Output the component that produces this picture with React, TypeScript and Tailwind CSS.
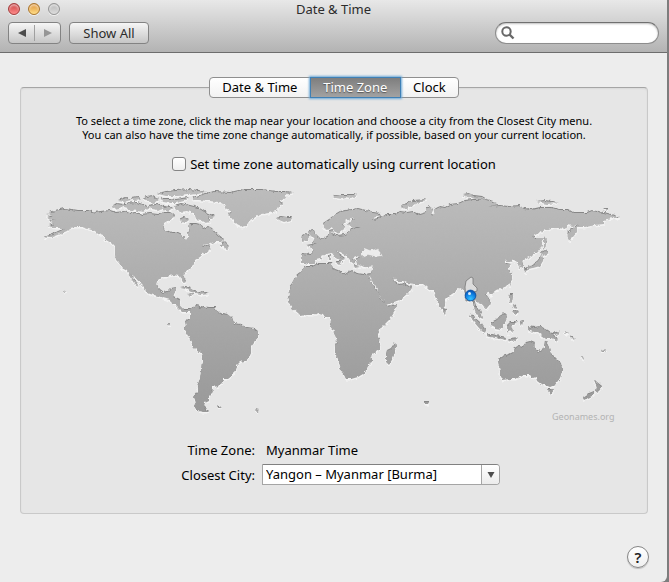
import React, { useState } from "react";

const NORTH_AMERICA =
  "M48 212L56 210L64 208L72 209L78 210L88 210L96 212L100 211L110 210L116 212L124 211L130 213L136 212L142 214L150 213L158 214L164 212L170 212L173 214L175 216L170 219L165 222L163 226L165 230L173 232L178 232L182 234L183 237L186 239L188 237L188 233L190 229L188 226L191 223L196 223L200 224L203 228L208 226L212 228L215 232L219 235L224 239L222 241L215 241L210 243L204 244L202 246L208 245L211 248L208 251L203 253L200 256L195 259L193 264L188 269L184 271L183 275L186 281L184 282L181 279L179 275L173 274L168 276L162 276L158 279L157 284L159 289L163 292L168 291L171 288L176 287L175 291L173 296L178 298L180 299L180 305L184 309L190 309L191 311L187 311L182 311L177 306L170 299L163 297L158 295L150 293L145 290L144 286L139 281L135 276L131 273L133 277L136 281L138 285L134 282L130 276L127 270L122 267L119 262L116 259L115 252L115 246L111 242L106 239L103 235L98 233L95 230L88 228L82 226L75 226L70 227L67 230L60 233L52 236L44 237L52 234L58 231L65 228L60 227L55 227L48 225L54 223L49 220L56 219L47 217L54 215L46 214L54 213Z";

const SOUTH_AMERICA =
  "M190 310L193 306L198 304L199 307L203 306L209 307L215 307L218 311L222 313L228 314L232 317L234 323L241 324L247 327L254 328L258 331L258 336L254 341L251 345L251 352L249 357L245 360L240 361L237 364L236 369L232 375L228 378L222 378L223 382L219 385L213 386L211 389L213 391L209 395L209 400L205 402L204 406L209 411L203 411L198 410L194 406L196 402L194 396L197 392L197 386L200 379L201 371L202 361L202 353L196 348L193 345L190 339L187 333L184 329L186 325L185 321L190 318Z";

const AFRICA =
  "M305 266L301 272L295 277L292 283L289 287L290 294L288 301L292 307L298 312L301 315L307 314L313 314L319 312L323 313L325 316L330 316L331 320L330 325L334 331L337 340L335 345L335 352L338 358L340 366L344 374L346 378L351 378L358 376L363 373L367 368L368 363L372 361L371 355L374 352L380 348L380 341L378 337L378 332L382 326L390 318L395 310L397 304L392 305L387 306L385 302L380 297L378 292L372 283L369 276L371 273L364 274L357 273L352 270L348 272L345 274L339 270L333 268L331 263L325 263L318 263L312 266Z";

const EURASIA =
  "M370 275L372 270L373 265L368 266L363 266L357 263L356 259L360 256L356 255L352 257L355 260L354 263L350 260L346 255L341 252L336 249L338 253L345 258L343 259L343 262L340 259L335 256L332 252L326 253L322 255L320 258L316 259L314 263L307 263L304 262L301 262L301 257L302 253L311 254L313 250L310 246L306 245L312 244L317 242L321 239L326 236L330 235L329 230L333 229L332 233L336 235L345 234L349 232L351 228L362 226L351 226L348 224L351 221L355 218L351 217L346 220L343 223L345 226L342 231L337 233L334 230L332 226L328 229L324 227L323 223L329 219L335 214L340 211L346 210L352 209L358 208L366 210L374 212L381 213L382 216L374 215L372 217L374 219L381 217L387 214L395 214L400 211L407 212L413 211L420 214L427 212L426 208L429 206L433 209L431 214L435 215L434 209L440 206L445 207L450 204L458 203L465 200L473 199L480 199L486 199L497 202L494 205L488 206L500 205L508 206L520 205L524 208L531 209L540 207L551 207L560 209L568 209L573 212L587 212L592 210L604 212L611 214L620 217L614 217L607 218L604 220L604 223L595 224L585 226L577 226L577 231L573 236L569 240L567 232L574 227L579 223L573 225L568 224L565 228L558 227L550 227L543 230L533 235L536 237L541 237L543 239L541 246L537 251L532 255L528 257L522 260L523 265L519 267L517 261L514 259L510 261L505 259L506 263L511 264L508 268L512 274L512 279L507 285L500 288L494 290L488 291L485 293L488 297L491 301L490 305L485 308L483 304L478 302L475 299L475 305L480 310L483 318L479 316L475 310L474 304L472 299L469 301L466 297L464 289L460 287L455 291L449 295L445 299L445 305L442 309L438 302L434 293L433 289L430 289L427 286L423 283L415 283L407 282L403 280L397 280L393 275L395 281L399 284L404 283L409 286L412 287L408 293L402 298L394 301L386 304L384 300L379 294L377 288L372 280Z";

const BODIES_OF_WATER =
  "M361 253L365 248L370 250L377 248L381 253L383 256L376 257L368 255L362 257Z";

const AUSTRALIA =
  "M498 360L502 356L509 354L513 352L513 349L519 345L523 346L526 342L530 341L535 343L533 347L541 352L544 347L545 340L548 345L550 352L555 357L561 363L562 370L560 377L555 384L550 386L545 384L541 383L537 380L536 376L533 377L530 374L523 374L516 378L510 378L502 379L500 377L500 370Z";

const GREENLAND =
  "M193 197L205 193L215 191L230 192L243 189L262 189L276 191L285 191L293 192L284 194L285 197L280 200L283 203L279 206L276 210L269 212L262 213L256 216L250 219L246 225L242 226L236 223L233 219L228 213L232 211L227 209L225 204L219 201L209 200L200 199L194 199Z";

const ISLANDS = [
  // Canadian archipelago
  "M112 205L117 203L123 204L120 207L113 208Z",
  "M118 200L126 197L131 199L124 201Z",
  "M124 203L137 202L145 205L150 207L143 211L132 209L124 207Z",
  "M149 205L156 204L164 206L158 209L152 208Z",
  "M132 197L138 196L141 199L134 200Z",
  "M143 197L151 195L158 199L154 202L146 200Z",
  "M158 193L166 191L176 190L190 189L206 191L198 193L188 194L178 195L166 195Z",
  "M161 198L170 198L176 199L188 197L184 200L176 202L170 202L163 201Z",
  "M161 207L168 205L173 208L168 211Z",
  "M174 205L181 203L190 205L198 207L206 212L215 216L212 218L207 216L211 221L206 222L201 219L195 218L194 213L187 210L180 211L175 208Z",
  "M180 218L185 217L189 219L185 222L181 221Z",
  // Atlantic
  "M220 246L224 241L229 246L228 248L224 246Z",
  "M276 217L281 216L287 217L292 217L291 219L284 221L279 219Z",
  "M308 232L312 229L315 233L318 236L322 240L319 242L312 242L314 238Z",
  "M302 235L306 233L309 235L308 239L301 240Z",
  // Nordic and Arctic
  "M333 195L340 194L357 194L351 197L345 196L342 198L336 197Z",
  "M401 207L405 203L413 200L427 199L415 203L407 208Z",
  "M462 194L468 193L474 195L482 196L487 199L475 198Z",
  "M537 201L545 200L558 202L547 203Z",
  "M603 208L608 208L606 210Z",
  // Caribbean
  "M180 287L186 286L193 289L199 292L193 292L185 288Z",
  "M196 293L203 291L209 293L201 294Z",
  "M188 294L192 293L193 295Z",
  // Mediterranean
  "M329 255L331 254L331 259L329 259Z",
  "M335 261L341 261L340 264Z",
  "M354 265L360 266L355 267Z",
  // Madagascar and Indian Ocean
  "M387 350L391 348L395 342L396 347L393 357L389 364L386 361L386 354Z",
  "M443 308L446 309L445 313L443 311Z",
  "M425 401L429 401L428 403L425 403Z",
  // Japan
  "M544 236L546 241L545 249L544 248Z",
  "M541 252L545 250L549 252L543 255Z",
  "M542 255L543 260L540 265L533 267L526 268L531 265L537 261Z",
  "M524 268L528 268L526 272Z",
  "M509 280L511 281L510 286Z",
  "M489 291L494 290L492 294L490 294Z",
  // South-east Asia
  "M469 314L473 316L480 322L486 330L485 333L479 327L474 321Z",
  "M486 333L496 335L507 337L506 339L495 337L486 335Z",
  "M491 322L497 319L503 312L507 316L504 323L501 328L495 327L491 325Z",
  "M507 325L511 321L517 321L513 324L511 326L513 332L509 328L508 334L507 330Z",
  "M510 294L513 294L512 302L509 300Z",
  "M512 304L518 308L513 307Z",
  "M515 310L519 311L516 314L512 312Z",
  "M510 338L518 337L513 341L508 340Z",
  "M520 321L523 320L522 325Z",
  // Oceania
  "M528 326L534 327L540 326L548 330L552 333L560 331L554 335L558 340L551 337L545 337L538 332L533 331L528 329Z",
  "M564 331L569 333L566 333Z",
  "M570 335L575 339L572 338Z",
  "M580 355L584 359L582 358Z",
  "M601 350L606 349L603 352Z",
  "M548 389L554 389L551 393Z",
  "M594 379L597 382L602 386L599 390L596 392L597 386Z",
  "M583 397L589 393L594 391L594 394L588 397L584 399Z",
  // Pacific and South Atlantic
  "M63 290L66 291L64 292Z",
  "M168 323L170 323L169 325Z",
  "M217 406L222 406L219 408Z",
  "M255 409L259 410L257 411Z",
].join("");

const LAND = [NORTH_AMERICA, SOUTH_AMERICA, AFRICA, EURASIA, AUSTRALIA, GREENLAND, ISLANDS].join("");

function WorldMap() {
  return (
    <svg viewBox="21 180 626 242" className="block w-full" role="img" aria-label="World map">
      <defs>
        <linearGradient id="land" gradientUnits="userSpaceOnUse" x1="0" y1="188" x2="0" y2="412">
          <stop offset="0" stopColor="#bcbcbc" />
          <stop offset="1" stopColor="#999999" />
        </linearGradient>
        <radialGradient id="pin" cx="0.5" cy="0.8" r="0.75">
          <stop offset="0" stopColor="#35c3ff" />
          <stop offset="0.55" stopColor="#1285e6" />
          <stop offset="1" stopColor="#0753b5" />
        </radialGradient>
        <filter id="coast" x="-2%" y="-2%" width="104%" height="104%">
          <feTurbulence type="fractalNoise" baseFrequency="0.25" numOctaves="2" seed="4" result="noise" />
          <feDisplacementMap in="SourceGraphic" in2="noise" scale="4" xChannelSelector="R" yChannelSelector="G" />
        </filter>
        <path id="continents" d={LAND} />
      </defs>
      <g filter="url(#coast)">
        <use href="#continents" y="2" fill="#f3f3f3" stroke="#f3f3f3" />
        <use href="#continents" fill="#868686" />
        <use href="#continents" y="1" fill="url(#land)" />
        <path d={BODIES_OF_WATER} fill="#ececec" stroke="#a5a5a5" strokeWidth="0.5" />
      </g>
      <path
        d="M465 287L466 281L471 277L473 278L473 284L477 288L477 291L474 292L474 300L476 307L474 306L473 299L466 301Z"
        fill="#dcdcdc"
        stroke="#777"
        strokeWidth="0.8"
      />
      <circle cx="470.500" cy="295.500" r="5.400" fill="url(#pin)" stroke="#0a4c9c" strokeWidth="0.8" />
      <circle cx="469.500" cy="293.500" r="1.500" fill="#fff" opacity="0.85" />
      <text x="552" y="420" className="fill-[#b3b3b3] text-[9px]">
        Geonames.org
      </text>
    </svg>
  );
}

function TrafficLight({ label, tone }: { label: string; tone: string }) {
  return (
    <button
      aria-label={label}
      className={`h-3 w-3 rounded-full border shadow-[inset_0_2px_2px_rgba(255,255,255,0.5),0_1px_0_rgba(255,255,255,0.6)] ${tone}`}
    />
  );
}

const TABS = ["Date & Time", "Time Zone", "Clock"];

export default function App() {
  const [tab, setTab] = useState("Time Zone");

  return (
    <div className="bg-[#7d7d7d] font-['Noto_Sans','Open_Sans',sans-serif] text-[13px] text-black">
      <div className="mr-0.5 flex min-h-screen flex-col rounded-br-md bg-[#ededed]">
        <header className="border-b border-[#6d6d6d] bg-linear-to-b from-[#e8e8e8] to-[#b3b3b3] pb-2">
          <div className="grid h-[22px] grid-cols-[1fr_auto_1fr] items-start px-2">
            <div className="flex gap-2 pt-[3px]">
              <TrafficLight label="Close" tone="border-[#a33b3b] bg-linear-to-b from-[#c83a3e] to-[#ff8d8d]" />
              <TrafficLight label="Minimize" tone="border-[#a9742c] bg-linear-to-b from-[#dc8f2d] to-[#ffe08a]" />
              <TrafficLight label="Zoom" tone="border-[#949494] bg-linear-to-b from-[#b5b5b5] to-[#dedede]" />
            </div>
            <h1 className="leading-[18px] text-[#2c2c2c]">Date &amp; Time</h1>
          </div>
          <div className="flex items-center gap-2 px-2">
            <div className="flex h-[22px] w-[53px] items-center rounded border border-[#838383] bg-linear-to-b from-[#f6f6f6] to-[#c6c6c6]">
              <button aria-label="Back" className="flex flex-1 justify-center">
                <svg viewBox="0 0 8 8" className="h-2 w-2">
                  <path d="M0 4L8 0V8Z" fill="#4c4c4c" />
                </svg>
              </button>
              <span className="h-4 w-px bg-[#a0a0a0]" />
              <button aria-label="Forward" className="flex flex-1 justify-center">
                <svg viewBox="0 0 8 8" className="h-2 w-2">
                  <path d="M8 4L0 0V8Z" fill="#969696" />
                </svg>
              </button>
            </div>
            <button className="h-[22px] w-20 rounded border border-[#838383] bg-linear-to-b from-[#f6f6f6] to-[#c6c6c6] leading-5 text-[#2c2c2c]">
              Show All
            </button>
            <div className="relative ml-auto w-[164px]">
              <svg
                viewBox="0 0 14 14"
                className="absolute top-1 left-1.5 h-[14px] w-[14px]"
                fill="none"
                stroke="#686868"
                strokeWidth="2"
              >
                <circle cx="5.500" cy="5.500" r="4.200" />
                <path d="M8.500 8.500L12.500 12.500" strokeWidth="2.400" />
              </svg>
              <input
                type="search"
                aria-label="Search"
                className="block h-[22px] w-full rounded-full border border-[#8d8d8d] border-t-[#707070] bg-white pr-3 pl-6 shadow-[inset_0_1px_2px_rgba(0,0,0,0.25)] outline-none"
              />
            </div>
          </div>
        </header>

        <main className="flex-1 pt-[34px] pr-[19px] pl-5">
          <section className="rounded-sm border border-[#c9c9c9] border-t-[#a5a5a5] bg-[#e6e6e6] pb-7 shadow-[inset_0_1px_2px_rgba(0,0,0,0.06)]">
            <div role="tablist" className="-mt-[11px] flex justify-center">
              <div className="flex h-[21px] w-[250px] rounded border border-[#8f8f8f] bg-linear-to-b from-white to-[#f2f2f2]">
                {TABS.map((name) => (
                  <button
                    key={name}
                    role="tab"
                    aria-selected={name === tab}
                    onClick={() => setTab(name)}
                    className={
                      name === tab
                        ? "-my-px w-[91px] border border-[#3f80b5] bg-linear-to-b from-[#7e7e7e] to-[#a2a2a2] leading-[19px] text-white shadow-[0_0_2px_1px_#6fa9d6] [text-shadow:0_1px_1px_#555]"
                        : "flex-auto leading-[19px]"
                    }
                  >
                    {name}
                  </button>
                ))}
              </div>
            </div>

            <p className="mt-4 text-center text-[11px] leading-[14px]">
              To select a time zone, click the map near your location and choose a city from the Closest City menu.
              <br />
              You can also have the time zone change automatically, if possible, based on your current location.
            </p>

            <label className="mt-3 flex items-center justify-center gap-1 leading-5">
              <input
                type="checkbox"
                className="h-[14px] w-[14px] appearance-none rounded-[3px] border border-[#858585] bg-linear-to-b from-white to-[#efefef] checked:bg-[#5d9fe0]"
              />
              Set time zone automatically using current location
            </label>

            <div className="mt-1.5">
              <WorldMap />
            </div>

            <div className="mt-[18px] grid grid-cols-[234px_1fr] items-center gap-y-1 leading-5">
              <span className="text-right">Time Zone:</span>
              <output className="pl-[11px]">Myanmar Time</output>
              <label htmlFor="city" className="text-right">
                Closest City:
              </label>
              <div className="relative ml-[7px] w-[238px]">
                <select
                  id="city"
                  className="block h-[21px] w-full appearance-none rounded-r border border-[#a5a5a5] border-t-[#808080] bg-white pl-[3px] leading-[19px] outline-none"
                >
                  <option>Yangon – Myanmar [Burma]</option>
                </select>
                <span className="pointer-events-none absolute inset-y-px right-px flex w-[18px] items-center justify-center rounded-r-[3px] border-l border-[#a5a5a5] bg-linear-to-b from-white to-[#ececec]">
                  <svg viewBox="0 0 8 6" className="h-[6px] w-[8px]">
                    <path d="M0.500 0H7.500L4 6Z" fill="#4d4d4d" />
                  </svg>
                </span>
              </div>
            </div>
          </section>
        </main>

        <footer className="flex justify-end pr-[18px] pb-[14px]">
          <button
            aria-label="Help"
            className="h-[22px] w-[22px] rounded-full border border-[#868686] bg-linear-to-b from-white to-[#f0f0f0] text-[15px] leading-5 font-semibold text-[#222] shadow-[0_1px_1px_rgba(0,0,0,0.2)]"
          >
            ?
          </button>
        </footer>
      </div>
    </div>
  );
}
